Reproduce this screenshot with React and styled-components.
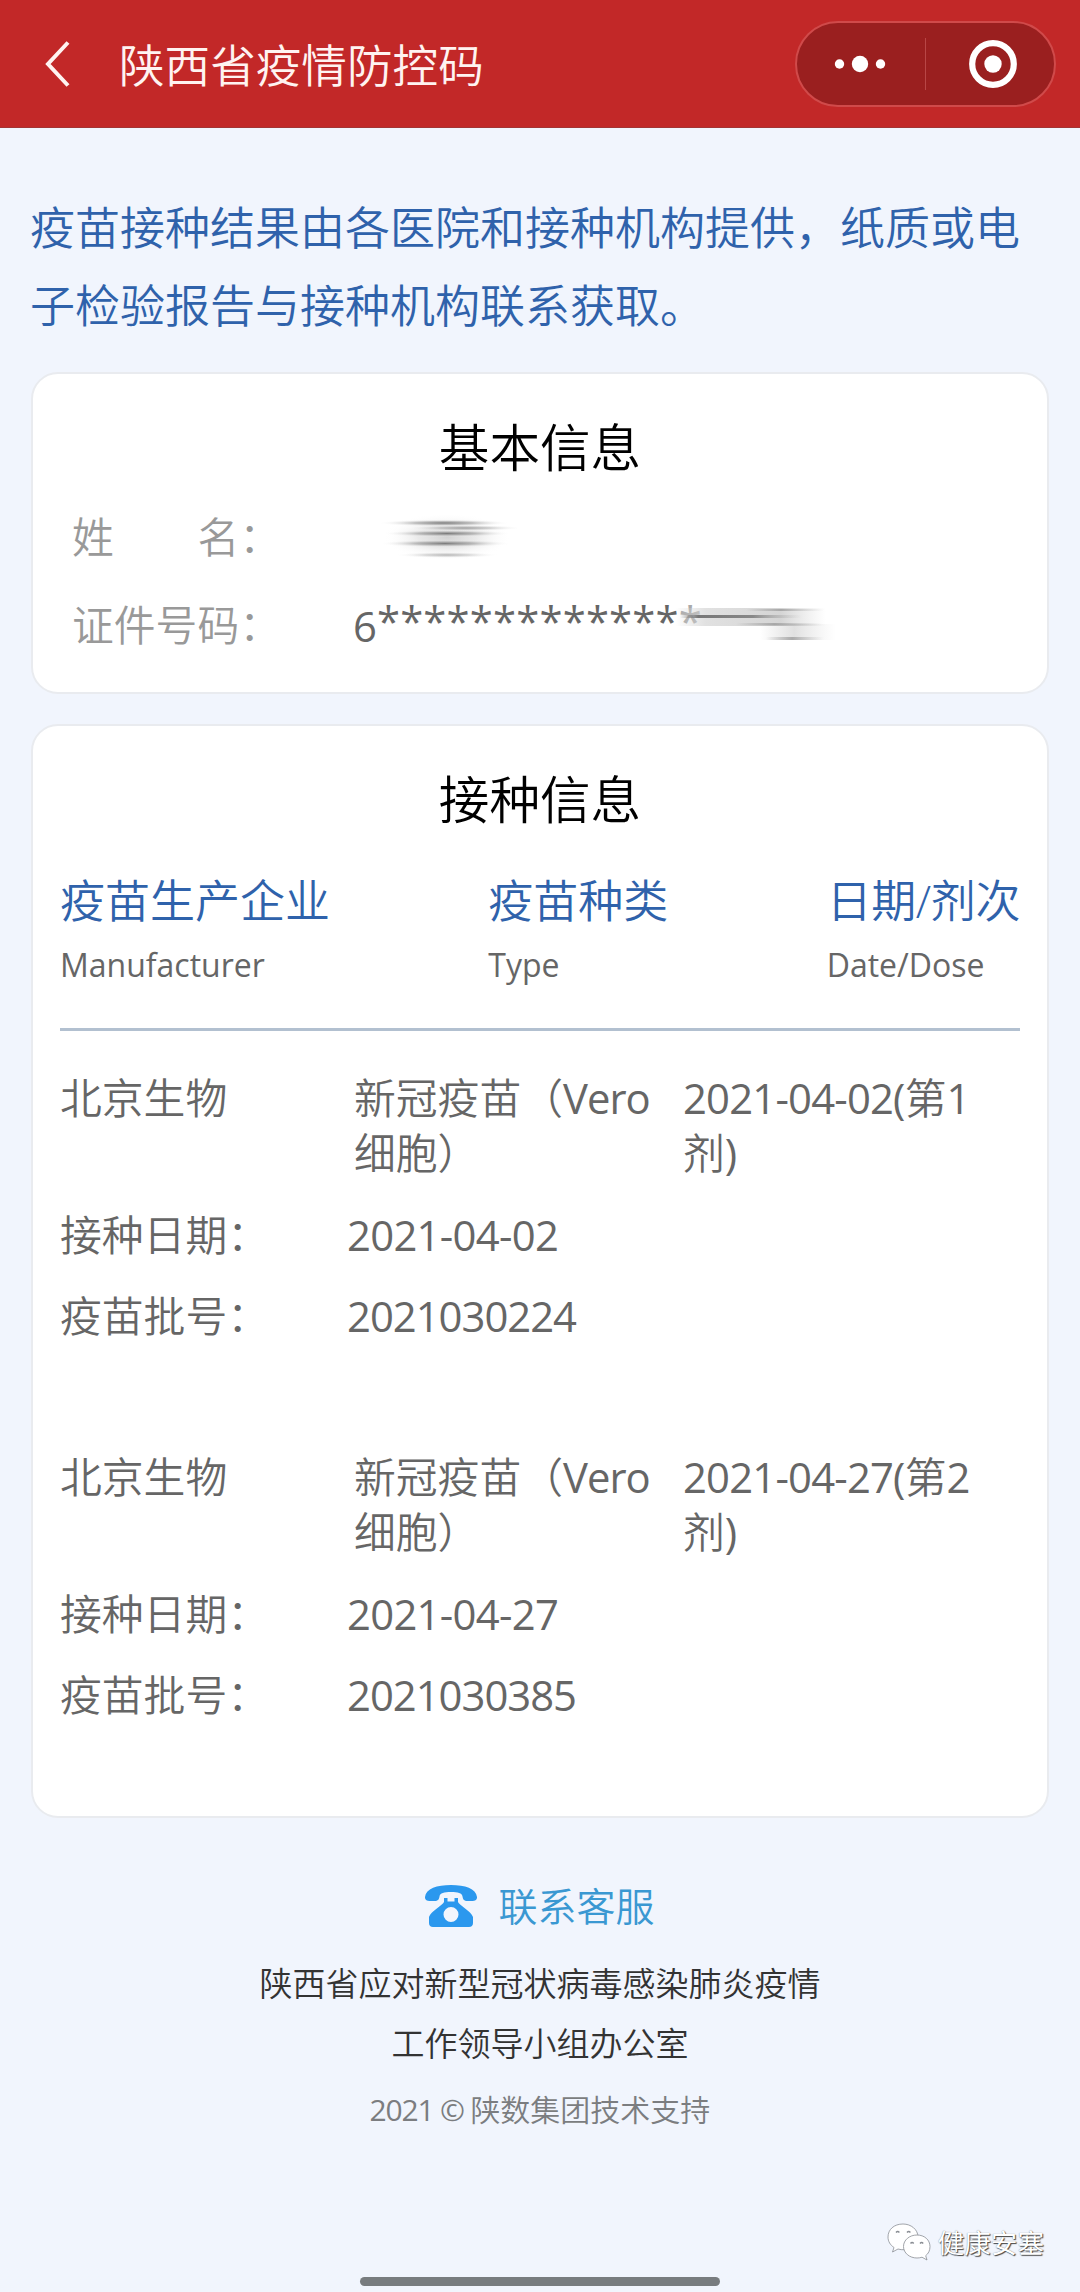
import React from 'react'
import styled, { createGlobalStyle } from 'styled-components'

const GlobalStyle = createGlobalStyle`
  * {
    box-sizing: border-box;
  }

  body {
    margin: 0;
    background: #f1f5fd;
    font-family: 'Open Sans', 'Noto Sans CJK SC', sans-serif;
    font-weight: 350;
  }
`

const Page = styled.div`
  position: relative;
  display: flex;
  flex-direction: column;
  width: 1080px;
  height: 2292px;
  background: #f1f5fd;
  overflow: hidden;
`

const NavBar = styled.header`
  display: flex;
  align-items: center;
  height: 128px;
  padding: 0 24px 0 44px;
  background: #c22828;
  border-bottom: 1px solid #a33434;
  color: #fff3f1;
`

const NavTitle = styled.h1`
  flex: 1;
  margin: 2px 0 0 47px;
  font-size: 45.6px;
  font-weight: inherit;
  line-height: 64px;
`

const Capsule = styled.div`
  display: flex;
  align-items: center;
  width: 261px;
  height: 86px;
  border: 2px solid #d04a4a;
  border-radius: 43px;
  background: #9a1f1f;
`

const CapsuleButton = styled.span`
  display: flex;
  align-items: center;
  width: 128px;
  height: 52px;
  padding-left: 37px;

  & + & {
    padding-left: 43px;
    border-left: 1px solid #b84646;
  }
`

const Notice = styled.p`
  margin: 61px 30px 27px;
  color: #2f62ab;
  font-size: 45px;
  line-height: 78px;
  white-space: nowrap;
`

const Card = styled.section`
  display: flex;
  flex-direction: column;
  height: ${p => p.$height}px;
  margin: 0 31px 30px;
  padding: 38px 27px 0;
  border: 2px solid #e9ebef;
  border-radius: 27px;
  background: #fff;
`

const CardTitle = styled.h2`
  margin: 0;
  color: #000;
  font-size: 50.6px;
  font-weight: inherit;
  line-height: 72px;
  text-align: center;
`

const InfoList = styled.div`
  margin: 10px 0 0 12px;
`

const InfoRow = styled.div`
  display: flex;
  height: 88px;
  font-size: 41.8px;
  line-height: 86px;
`

const InfoLabel = styled.span`
  width: 281px;
  color: #999;
  white-space: pre;
`

const InfoValue = styled.span`
  display: flex;
  align-items: center;
  color: #666;
  font-weight: 400;
`

const Stars = styled.span`
  margin-top: -10px;
  letter-spacing: 0.2px;
`

const FadedStar = styled.span`
  color: #aaa;
`

const NameSmudge = styled.svg`
  margin-left: 28px;
`

const NumberSmudge = styled.svg`
  margin-left: -26px;
`

const TableHead = styled.div`
  display: flex;
  justify-content: space-between;
  margin-top: 33px;
  padding-bottom: 41px;
  border-bottom: 3px solid #b2c0d0;
`

const HeadZh = styled.div`
  color: #2f62ab;
  font-size: 45px;
  line-height: 64px;
  letter-spacing: ${p => (p.$tight ? '-.4px' : 'normal')};
`

const HeadEn = styled.div`
  margin-top: 10px;
  color: #666;
  font-size: 32px;
  font-weight: 400;
  line-height: 44px;
`

const Record = styled.div`
  margin-top: ${p => (p.$first ? 39 : 93)}px;
  color: #666;
  font-size: 41.8px;
`

const RecordMain = styled.div`
  display: grid;
  grid-template-columns: 294px 329px 1fr;
  margin-bottom: 14px;
  line-height: 55px;
  white-space: nowrap;
`

const RecordRow = styled.div`
  display: flex;
  line-height: 81px;
`

const RecordLabel = styled.span`
  width: 287px;
`

const Latin = styled.span`
  font-weight: 400;
  letter-spacing: ${p => p.$spacing ?? -1}px;
`

const Footer = styled.footer`
  display: flex;
  flex-direction: column;
  align-items: center;
  margin-top: 29px;
`

const Contact = styled.div`
  display: flex;
  align-items: center;
  gap: 21px;
  height: 60px;
  padding-bottom: 3px;
  color: #3a98d2;
  font-size: 39px;
  line-height: 56px;
`

const Organisation = styled.p`
  margin: 17px 0 0;
  color: #333;
  font-size: 33px;
  line-height: 60px;
  text-align: center;
`

const Copyright = styled.p`
  margin: 14px 0 0;
  color: #7b7d80;
  font-size: 30px;
  line-height: 44px;
`

const Watermark = styled.div`
  position: absolute;
  right: 36px;
  bottom: 29px;
  display: flex;
  align-items: center;
  gap: 7px;
  color: #fff;
  font-size: 26.6px;
  font-weight: 400;
  line-height: 40px;
  text-shadow: 1px 1px 1px #444, 0 0 1px #777;
`

const HomeBar = styled.div`
  width: 360px;
  height: 9px;
  margin: auto auto 6px;
  border-radius: 5px;
  background: #787c7f;
`

const records = [
  { maker: '北京生物', date: '2021-04-02', dose: '1', batch: '2021030224' },
  { maker: '北京生物', date: '2021-04-27', dose: '2', batch: '2021030385' }
]

const columns = [
  ['疫苗生产企业', 'Manufacturer'],
  ['疫苗种类', 'Type'],
  ['日期/剂次', 'Date/Dose']
]

const BackIcon = () => (
  <svg width="28" height="48" viewBox="0 0 28 48" fill="none">
    <path d="M24 2.500L4 24l20 21.500" stroke="#fff3f1" strokeWidth="4" />
  </svg>
)

const MoreIcon = () => (
  <svg width="52" height="18" viewBox="0 0 52 18" fill="#fff">
    <circle cx="5.500" cy="9" r="4.700" />
    <circle cx="26" cy="9" r="8.200" />
    <circle cx="46.500" cy="9" r="4.700" />
  </svg>
)

const CloseIcon = () => (
  <svg width="48" height="48" viewBox="0 0 48 48">
    <circle cx="24" cy="24" r="20.800" fill="none" stroke="#fff" strokeWidth="6.200" />
    <circle cx="24" cy="24" r="8.700" fill="#fff" />
  </svg>
)

const PhoneIcon = () => (
  <svg width="52" height="42" viewBox="0 0 52 42" fill="#2b98ee">
    <path d="M0 12C1 3.500 12 0 26 0s25 3.500 26 12c.3 3-1.700 4-4.500 4h-5c-3.500 0-4.500-1.500-5-4.500C37 8 33 7 26 7s-11 1-11.500 4.500C14 14.500 13 16 9.500 16h-5C1.700 16-.3 15 0 12z" />
    <path
      fillRule="evenodd"
      d="M19 13h3.500v3.500h7V13H33v4c1 3 13 9 15 15v6c0 2.500-1.500 4-4 4H8c-2.500 0-4-1.500-4-4v-6c2-6 14-12 15-15zM26 22a7.500 7.500 0 1 0 0 15 7.500 7.500 0 0 0 0-15z"
    />
  </svg>
)

const WechatIcon = () => (
  <svg width="44" height="40" viewBox="0 0 44 40" fill="#fff" stroke="#8a8e94" strokeWidth=".8">
    <path d="M16 1C7 1 1 6.500 1 14c0 4.500 2.300 8 6 10.500L5.500 29l5.500-3c8 2.500 20-1 20-12C31 6.500 24 1 16 1z" />
    <path d="M30 12c-7.500 0-13.500 5-13.500 11.500S22.500 35 30 35c2 0 3.500-.3 5-.8l5 2.800-1.300-4.300C41.500 30.500 43 27.500 43 23.500 43 17 37.500 12 30 12z" />
    <path d="M9 9.500q1.700-2 3.400 0M20 9.500q1.700-2 3.400 0M23.500 20.500q1.600-2 3.200 0M33 20.500q1.600-2 3.200 0" fill="none" strokeWidth="1.400" />
  </svg>
)

// horizontal streaks over the holder's name
const NameMask = () => (
  <NameSmudge width="136" height="46" viewBox="0 0 136 46">
    <defs>
      <radialGradient id="streak">
        <stop offset="0" stopColor="#777" stopOpacity=".95" />
        <stop offset=".45" stopColor="#999" stopOpacity=".6" />
        <stop offset="1" stopColor="#fff" stopOpacity="0" />
      </radialGradient>
    </defs>
    <ellipse cx="66" cy="22" rx="64" ry="24" fill="url(#streak)" opacity=".35" />
    <ellipse cx="63" cy="8" rx="66" ry="3.500" fill="url(#streak)" />
    <ellipse cx="84" cy="13" rx="58" ry="3" fill="url(#streak)" opacity=".7" />
    <ellipse cx="66" cy="18.500" rx="64" ry="3.500" fill="url(#streak)" />
    <ellipse cx="64" cy="28.500" rx="66" ry="3.800" fill="url(#streak)" />
    <ellipse cx="66" cy="40" rx="52" ry="3" fill="url(#streak)" opacity=".55" />
  </NameSmudge>
)

// the tail of the certificate number is wiped out the same way
const NumberMask = () => (
  <NumberSmudge width="160" height="44" viewBox="0 0 160 44">
    <defs>
      <linearGradient id="wipe">
        <stop offset="0" stopColor="#ccc" stopOpacity="0" />
        <stop offset=".2" stopColor="#d4d4d4" stopOpacity=".7" />
        <stop offset=".7" stopColor="#d0d0d0" stopOpacity=".9" />
        <stop offset="1" stopColor="#ddd" stopOpacity="0" />
      </linearGradient>
      <linearGradient id="line">
        <stop offset="0" stopColor="#777" stopOpacity="0" />
        <stop offset=".15" stopColor="#777" />
        <stop offset=".6" stopColor="#888" />
        <stop offset="1" stopColor="#bbb" stopOpacity="0" />
      </linearGradient>
      <linearGradient id="tail">
        <stop offset="0" stopColor="#999" stopOpacity="0" />
        <stop offset=".45" stopColor="#999" stopOpacity=".75" />
        <stop offset="1" stopColor="#bbb" stopOpacity="0" />
      </linearGradient>
    </defs>
    <rect x="0" y="4" width="150" height="18" fill="url(#wipe)" />
    <rect x="4" y="11" width="122" height="3" fill="url(#line)" />
    <rect x="70" y="5" width="78" height="2" fill="url(#tail)" />
    <rect x="60" y="19" width="86" height="2.500" fill="url(#tail)" />
    <rect x="84" y="20" width="76" height="16" fill="url(#tail)" opacity=".4" />
    <rect x="90" y="33" width="58" height="3" fill="url(#tail)" />
  </NumberSmudge>
)

const VaccineRecord = ({ record, first }) => (
  <Record $first={first}>
    <RecordMain>
      <span>{record.maker}</span>
      <span>
        新冠疫苗（<Latin>Vero</Latin>
        <br />
        细胞）
      </span>
      <span>
        <Latin $spacing={-0.8}>{record.date}(</Latin>第<Latin>{record.dose}</Latin>
        <br />
        剂<Latin>)</Latin>
      </span>
    </RecordMain>
    <RecordRow>
      <RecordLabel>接种日期：</RecordLabel>
      <Latin $spacing={-0.7}>{record.date}</Latin>
    </RecordRow>
    <RecordRow>
      <RecordLabel>疫苗批号：</RecordLabel>
      <Latin>{record.batch}</Latin>
    </RecordRow>
  </Record>
)

export default function App() {
  return (
    <Page lang="zh-CN">
      <GlobalStyle />
      <NavBar>
        <BackIcon />
        <NavTitle>陕西省疫情防控码</NavTitle>
        <Capsule>
          <CapsuleButton>
            <MoreIcon />
          </CapsuleButton>
          <CapsuleButton>
            <CloseIcon />
          </CapsuleButton>
        </Capsule>
      </NavBar>

      <Notice>
        疫苗接种结果由各医院和接种机构提供，纸质或电
        <br />
        子检验报告与接种机构联系获取。
      </Notice>

      <Card $height={322}>
        <CardTitle>基本信息</CardTitle>
        <InfoList>
          <InfoRow>
            <InfoLabel>{'姓\u3000\u3000名：'}</InfoLabel>
            <InfoValue>
              <NameMask />
            </InfoValue>
          </InfoRow>
          <InfoRow>
            <InfoLabel>证件号码：</InfoLabel>
            <InfoValue>
              6
              <Stars>
                {'*'.repeat(13)}
                <FadedStar>*</FadedStar>
              </Stars>
              <NumberMask />
            </InfoValue>
          </InfoRow>
        </InfoList>
      </Card>

      <Card $height={1094}>
        <CardTitle>接种信息</CardTitle>
        <TableHead>
          {columns.map(([zh, en]) => (
            <div key={en}>
              <HeadZh $tight={zh.includes('/')}>{zh}</HeadZh>
              <HeadEn>{en}</HeadEn>
            </div>
          ))}
        </TableHead>
        {records.map((record, i) => (
          <VaccineRecord key={record.batch} record={record} first={i === 0} />
        ))}
      </Card>

      <Footer>
        <Contact>
          <PhoneIcon />
          联系客服
        </Contact>
        <Organisation>
          陕西省应对新型冠状病毒感染肺炎疫情
          <br />
          工作领导小组办公室
        </Organisation>
        <Copyright>
          <Latin $spacing={-1.2}>2021 © </Latin>陕数集团技术支持
        </Copyright>
      </Footer>

      <HomeBar />
      <Watermark>
        <WechatIcon />
        健康安塞
      </Watermark>
    </Page>
  )
}
